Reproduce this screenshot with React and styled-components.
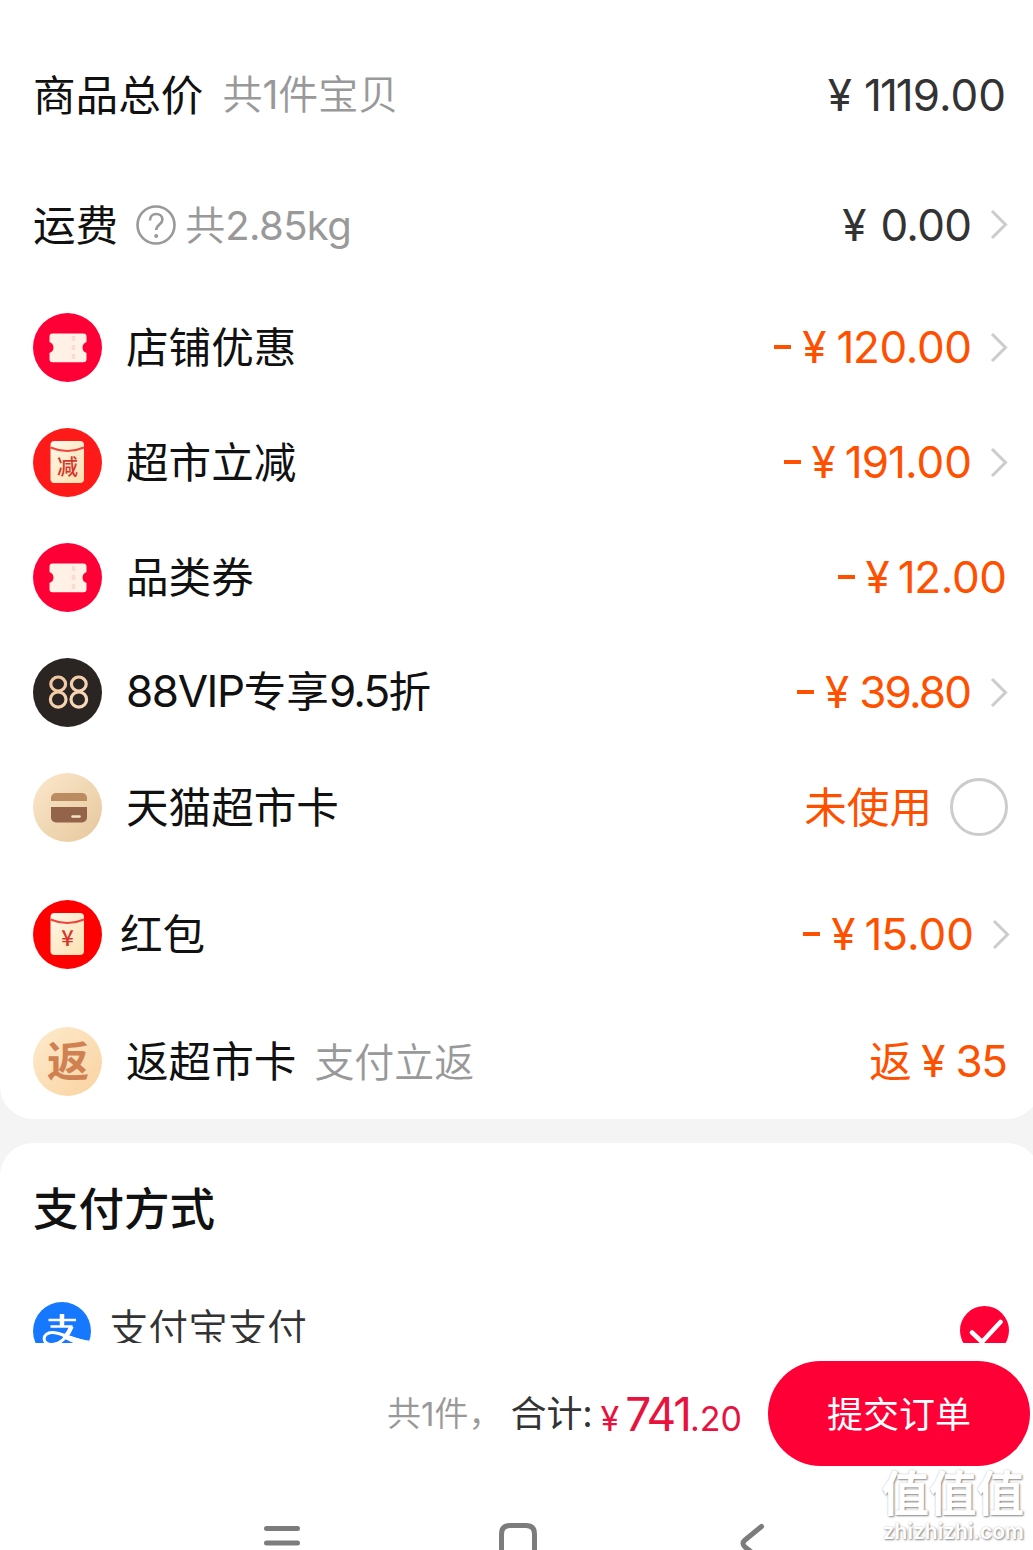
import React from 'react';
import styled, { createGlobalStyle } from 'styled-components';

const cjk = "'Noto Sans CJK SC', sans-serif";
const latin = "Inter, 'Noto Sans CJK SC', sans-serif";

const GlobalStyle = createGlobalStyle`
  body {
    margin: 0;
    overflow: hidden;
  }
`;

const Page = styled.div`
  background: #fff;
  display: flex;
  flex-direction: column;
  font-family: ${cjk};
  height: 1550px;
  overflow: hidden;
  position: relative;
  width: 1033px;
`;

const ScrollArea = styled.div`
  background: #f4f4f4;
  display: flex;
  flex: none;
  flex-direction: column;
  gap: 24px;
  height: 1343px;
  overflow: hidden;
`;

const Card = styled.div`
  background: #fff;
  border-radius: ${props => (props.$first ? '0 0 33px 33px' : '33px 33px 0 0')};
  box-sizing: border-box;
  flex: none;
  padding: ${props => (props.$first ? '30px 32px 0 33px' : '0 32px 0 33px')};
  width: 1040px;
`;

const Row = styled.div`
  align-items: center;
  display: flex;
  height: ${props => props.$height || 115}px;
`;

const Badge = styled.svg`
  display: block;
  flex: none;
  margin-right: ${props => props.$gap || 24}px;
`;

const Label = styled.div`
  color: #111;
  font-size: 42.6px;
  line-height: 60px;
  padding-bottom: 5px;
  white-space: nowrap;
`;

const Latin = styled.span`
  font-family: ${latin};
  font-size: ${props => props.$size || 44}px;
  font-weight: 400;
  letter-spacing: ${props => props.$tracking || 0}px;
`;

const Note = styled.div`
  color: #999;
  font-size: 40px;
  font-weight: 350;
  line-height: 60px;
  margin-left: ${props => props.$gap || 18}px;
  padding-bottom: ${props => props.$lift || 4}px;
  white-space: nowrap;
`;

const Value = styled.div`
  align-items: center;
  color: ${props => (props.$plain ? '#333' : '#ff5000')};
  display: flex;
  font-size: 42.6px;
  line-height: 60px;
  margin-left: auto;
  margin-right: ${props => props.$inset || 0}px;
  white-space: nowrap;
`;

const Status = styled.span`
  padding-bottom: 5px;
`;

const Minus = styled.span`
  background: currentColor;
  height: 4px;
  margin: 0 11px 2px 0;
  width: 17px;
`;

const Yen = styled.span`
  font-family: ${latin};
  font-size: 44px;
  margin-right: ${props => props.$gap}px;
  padding-bottom: 1px;
`;

const Digits = styled.span`
  font-family: ${latin};
  font-size: 44px;
  letter-spacing: ${props => props.$tracking}px;
  margin-right: ${props => -props.$tracking}px;
  padding-bottom: 1px;
`;

const One = styled.span`
  margin: 0 -1px 0 -1px;
`;

const Radio = styled.div`
  border: 3px solid #ccc;
  border-radius: 50%;
  box-sizing: border-box;
  height: 58px;
  margin-bottom: 1px;
  margin-left: 18px;
  width: 58px;
`;

const Arrow = styled.svg`
  display: block;
  flex: none;
  margin-left: 18px;
`;

const Heading = styled.div`
  color: #111;
  font-size: 45.5px;
  font-weight: 500;
  line-height: 66px;
  padding-top: 30px;
`;

const PayRow = styled.div`
  align-items: center;
  color: #333;
  display: flex;
  font-size: 39.6px;
  font-weight: 350;
  height: 60px;
  line-height: 60px;
  margin-top: 62px;
`;

const PayName = styled.div`
  margin-left: 18px;
  padding-bottom: 10px;
`;

const Checked = styled.svg`
  display: block;
  margin: 0 -1px 1px auto;
`;

const Footer = styled.div`
  align-items: center;
  display: flex;
  flex: none;
  height: 105px;
  justify-content: flex-end;
  padding: 18px 3px 0 0;
`;

const Count = styled.div`
  color: #999;
  font-size: 34px;
  font-weight: 350;
  margin-right: 8px;
  padding-bottom: 5px;
  white-space: nowrap;
`;

const Total = styled.div`
  color: #333;
  font-size: 36px;
  padding-bottom: 5px;
  white-space: nowrap;
`;

const Price = styled.div`
  color: #e8123f;
  font-family: ${latin};
  font-size: 34px;
  margin: 0 26px 0 8px;
  white-space: nowrap;
`;

const Whole = styled.span`
  font-size: 46px;
  letter-spacing: -2px;
  margin-left: 6px;
`;

const Submit = styled.button`
  background: #ff0036;
  border: 0;
  border-radius: 53px;
  color: #fff;
  font-family: ${cjk};
  font-size: 36px;
  height: 105px;
  padding: 0 0 4px;
  width: 262px;
`;

const NavBar = styled.div`
  flex: none;
  height: 84px;
`;

const Watermark = styled.div`
  color: #fff;
  position: absolute;
  right: 9px;
  text-align: right;
  text-shadow: 1px 1px 2px #888, 0 0 2px #ccc;
  top: 1464px;
`;

const WatermarkName = styled.div`
  font-size: 47.5px;
  font-weight: 700;
  line-height: 53px;
`;

const WatermarkSite = styled.div`
  font-family: Inter, sans-serif;
  font-size: 21px;
  font-weight: 600;
  line-height: 30px;
`;

function Chevron() {
  return (
    <Arrow width="18" height="32" viewBox="0 0 18 32">
      <path d="M2 2 15.500 15.500 2 29" fill="none" stroke="#ccc" strokeWidth="3" />
    </Arrow>
  );
}

function Amount({ value, yenGap = 9, tracking = 0, minus = true }) {
  return (
    <>
      {minus && <Minus />}
      <Yen $gap={yenGap}>¥</Yen>
      <Digits $tracking={tracking}>
        {value.split('').map((c, i) => (c === '1' ? <One key={i}>1</One> : c))}
      </Digits>
    </>
  );
}

function TicketBadge() {
  return (
    <Badge width="69" height="69" viewBox="0 0 69 69">
      <circle cx="34.5" cy="34.5" r="34.5" fill="#ff0036" />
      <path
        d="M19.500 20.500h31a3 3 0 0 1 3 3v5.500q-4 1.500-4 5.500t4 5.500v6.200a3 3 0 0 1-3 3h-31a3 3 0 0 1-3-3V40q4-1.500 4-5.500t-4-5.500v-5.500a3 3 0 0 1 3-3z"
        fill="#fff1e6"
      />
      <path d="M40.500 23v25" stroke="#f9dcd3" strokeWidth="3.500" strokeDasharray="5 4" />
    </Badge>
  );
}

function PacketBadge({ text, color, gap, size }) {
  return (
    <Badge $gap={gap} width="69" height="69" viewBox="0 0 69 69">
      <defs>
        <linearGradient id="packet" x1="0" y1="0" x2="1" y2="1">
          <stop offset="0" stopColor="#fff8ea" />
          <stop offset="1" stopColor="#fbe0ae" />
        </linearGradient>
      </defs>
      <circle cx="34.5" cy="34.5" r="34.5" fill={color} />
      <rect x="17.500" y="13" width="33.500" height="42" rx="4" fill="url(#packet)" />
      <path d="M17.500 19.500q16.750 7 33.500 0" fill="none" stroke="#f0453a" strokeWidth="2" />
      <text x="34.500" y="45.500" fill="#d8352a" fontFamily={cjk} fontSize={size} fontWeight="500" textAnchor="middle">
        {text}
      </text>
    </Badge>
  );
}

function VipBadge() {
  return (
    <Badge width="69" height="69" viewBox="0 0 69 69">
      <defs>
        <linearGradient id="gold" gradientUnits="userSpaceOnUse" x1="16" y1="18" x2="50" y2="52">
          <stop offset="0" stopColor="#eec39a" />
          <stop offset="1" stopColor="#f8dcbc" />
        </linearGradient>
      </defs>
      <circle cx="34.5" cy="34.5" r="34.5" fill="#2a2422" />
      <g fill="none" stroke="url(#gold)" strokeWidth="3.200">
        <ellipse cx="25.200" cy="26" rx="7.400" ry="7" />
        <ellipse cx="25.200" cy="41.500" rx="7.800" ry="7.600" />
        <ellipse cx="45.800" cy="26" rx="7.400" ry="7" />
        <ellipse cx="45.800" cy="41.500" rx="7.800" ry="7.600" />
      </g>
    </Badge>
  );
}

function CardBadge() {
  return (
    <Badge width="69" height="69" viewBox="0 0 69 69">
      <defs>
        <linearGradient id="sand" x1="0" y1="0" x2="1" y2="1">
          <stop offset="0" stopColor="#fbe8cc" />
          <stop offset="1" stopColor="#e6c79c" />
        </linearGradient>
      </defs>
      <circle cx="34.5" cy="34.5" r="34.5" fill="url(#sand)" />
      <path d="M23 20h26a5 5 0 0 1 5 5v3H18v-3a5 5 0 0 1 5-5z" fill="#bb8b61" />
      <path d="M18 34h36v10.500a5 5 0 0 1-5 5H23a5 5 0 0 1-5-5z" fill="#94644a" />
      <path d="M39.500 43.500h7" stroke="#f6e2c9" strokeWidth="2.500" strokeLinecap="round" />
    </Badge>
  );
}

function ReturnBadge() {
  return (
    <Badge width="69" height="69" viewBox="0 0 69 69">
      <defs>
        <linearGradient id="peach" x1="0" y1="0" x2="1" y2="1">
          <stop offset="0" stopColor="#fdebcd" />
          <stop offset="1" stopColor="#fad2a0" />
        </linearGradient>
      </defs>
      <circle cx="34.5" cy="34.5" r="34.5" fill="url(#peach)" />
      <text x="35" y="50" fill="#cf8152" fontFamily={cjk} fontSize="42" fontWeight="700" textAnchor="middle">
        返
      </text>
    </Badge>
  );
}

function HelpIcon() {
  return (
    <Badge $gap={-1} width="58" height="40" viewBox="-18 0 58 40">
      <circle cx="20" cy="20" r="18.500" fill="none" stroke="#999" strokeWidth="2.600" />
      <path
        d="M14 15.500c0-4 2.700-6.500 6.200-6.500s6.200 2.300 6.200 5.700c0 4.600-6.200 5-6.200 10.300"
        fill="none"
        stroke="#999"
        strokeWidth="2.600"
      />
      <circle cx="20.200" cy="31" r="2" fill="#999" />
    </Badge>
  );
}

function AlipayIcon() {
  return (
    <svg width="58" height="58" viewBox="0 0 58 58">
      <defs>
        <clipPath id="disc">
          <circle cx="29" cy="29" r="29" />
        </clipPath>
      </defs>
      <g clipPath="url(#disc)">
        <rect width="58" height="58" fill="#1677ff" />
        <path d="M15.500 18h27.500M17.500 24.500h22" stroke="#fff" strokeWidth="2.300" />
        <path d="M29 12v13" stroke="#fff" strokeWidth="4.500" />
        <path
          d="M38.500 24.500C35 35 27 42.500 19 42.500c-11 0-10-12 0-12 9 0 22 7.500 40 11"
          fill="none"
          stroke="#fff"
          strokeWidth="3"
        />
        <path d="M38.500 24.500Q36 31 32 35" fill="none" stroke="#fff" strokeWidth="4.500" />
        <path d="M26 31Q40 36 58 39v10Q44 43 32 37z" fill="#fff" />
      </g>
    </svg>
  );
}

function App() {
  return (
    <Page>
      <GlobalStyle />
      <ScrollArea>
        <Card $first>
          <Row $height={130}>
            <Label>商品总价</Label>
            <Note $gap={19} $lift={3}>共<Latin $size={39}>1</Latin>件宝贝</Note>
            <Value $plain $inset={2}><Amount value="1119.00" yenGap={13} minus={false} /></Value>
          </Row>
          <Row $height={130}>
            <Label>运费</Label>
            <HelpIcon />
            <Note $gap={10} $lift={2}>共<Latin $size={40} $tracking={-0.6}>2.85kg</Latin></Note>
            <Value $plain><Amount value="0.00" yenGap={14} tracking={-0.7} minus={false} /><Chevron /></Value>
          </Row>
          <Row>
            <TicketBadge />
            <Label>店铺优惠</Label>
            <Value><Amount value="120.00" yenGap={11} tracking={-0.4} /><Chevron /></Value>
          </Row>
          <Row>
            <PacketBadge text="减" color="#ff1a1a" size={21} />
            <Label>超市立减</Label>
            <Value><Amount value="191.00" yenGap={10} /><Chevron /></Value>
          </Row>
          <Row>
            <TicketBadge />
            <Label>品类券</Label>
            <Value $inset={1}><Amount value="12.00" yenGap={9} tracking={-0.4} /></Value>
          </Row>
          <Row>
            <VipBadge />
            <Label>
              <Latin $tracking={-1.4}>88VIP</Latin>专享<Latin $tracking={-1.8}>9.5</Latin>折
            </Label>
            <Value><Amount value="39.80" yenGap={10} tracking={-1.8} /><Chevron /></Value>
          </Row>
          <Row>
            <CardBadge />
            <Label>天猫超市卡</Label>
            <Value><Status>未使用</Status><Radio /></Value>
          </Row>
          <Row $height={139}>
            <PacketBadge text="¥" color="#ff0000" gap={18} size={22} />
            <Label>红包</Label>
            <Value $inset={-2}><Amount value="15.00" yenGap={10} /><Chevron /></Value>
          </Row>
          <Row>
            <ReturnBadge />
            <Label>返超市卡</Label>
            <Note>支付立返</Note>
            <Value><Status>返&nbsp;</Status><Amount value="35" yenGap={10} tracking={-1.4} minus={false} /></Value>
          </Row>
        </Card>
        <Card>
          <Heading>支付方式</Heading>
          <PayRow>
            <AlipayIcon />
            <PayName>支付宝支付</PayName>
            <Checked width="49" height="49" viewBox="0 0 49 49">
              <circle cx="24.5" cy="24.5" r="24.5" fill="#ff0036" />
              <path d="M12 26.500l10 9.500 18.500-20" fill="none" stroke="#fff" strokeWidth="4.500" strokeLinecap="round" />
            </Checked>
          </PayRow>
        </Card>
      </ScrollArea>
      <Footer>
        <Count>共<Latin $size={33}>1</Latin>件，</Count>
        <Total>合计:</Total>
        <Price>¥<Whole>741</Whole>.20</Price>
        <Submit>提交订单</Submit>
      </Footer>
      <NavBar>
        <svg width="1033" height="84" viewBox="0 0 1033 84" fill="none" stroke="#7c7c7c" strokeWidth="5" strokeLinecap="round">
          <path d="M266.500 62.500h31M266.500 77h31" />
          <path d="M501.500 90V68q0-8.500 8.500-8.500h16q8.500 0 8.500 8.500v22" />
          <path d="M761.500 60.500 745 74q-4 3.500 0 7l16.500 13" />
        </svg>
      </NavBar>
      <Watermark>
        <WatermarkName>值值值</WatermarkName>
        <WatermarkSite>zhizhizhi.com</WatermarkSite>
      </Watermark>
    </Page>
  );
}

export default App;
